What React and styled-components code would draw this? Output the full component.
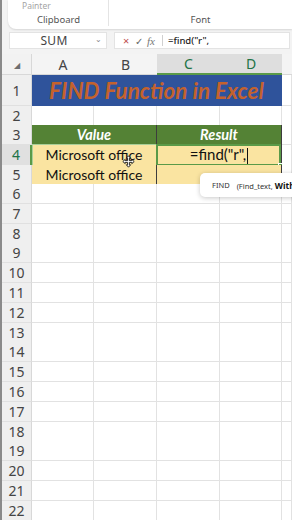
import React from "react";
import styled, { createGlobalStyle } from "styled-components";

const GlobalStyle = createGlobalStyle`
  html, body { margin: 0; padding: 0; }
  body {
    background: #f3f3f3;
    font-family: "Noto Sans", "Open Sans", sans-serif;
    overflow: hidden;
  }
  * { box-sizing: border-box; }
`;

const COLS = "30px 62px 63px 63px 62px 1fr";
const GRID = "#e2e2e2";
const GREEN = "#5a9a48";

const Page = styled.div`
  width: 292px;
  height: 520px;
  display: flex;
  flex-direction: column;
  background: #f3f3f3;
  border-left: 2px solid #8a8a8a;
  position: relative;
  overflow: hidden;
`;

/* ribbon */
const Ribbon = styled.div`
  flex: none;
  height: 29px;
  padding: 0 0 0 6px;
  display: flex;
`;

const RibbonPanel = styled.div`
  flex: 1;
  display: flex;
  background: #fff;
  border-radius: 0 0 0 8px;
  box-shadow: 0 1px 2px rgba(0, 0, 0, 0.12);
`;

const Group = styled.div`
  width: ${(p) => p.$w || "auto"};
  flex: ${(p) => (p.$w ? "none" : 1)};
  display: flex;
  flex-direction: column;
  justify-content: space-between;
  padding: 1px 0 3px;
  position: relative;

  &::after {
    content: "";
    display: ${(p) => (p.$divider ? "block" : "none")};
    position: absolute;
    right: 0;
    top: 0;
    bottom: 3px;
    width: 1px;
    background: #e4e4e4;
  }
`;

const SmallLabel = styled.span`
  font-size: 8.5px;
  color: #a4a4a4;
  padding-left: 14px;
  line-height: 10px;
`;

const GroupLabel = styled.span`
  font-size: 9.5px;
  color: #555;
  text-align: center;
  line-height: 12px;
`;

/* formula bar */
const FormulaBar = styled.div`
  flex: none;
  height: 17px;
  margin-top: 3px;
  display: flex;
  gap: 7px;
  padding: 0 2px 0 7px;
`;

const NameBox = styled.div`
  width: 98px;
  background: #fff;
  border: 1px solid #e3e3e3;
  display: flex;
  align-items: center;
  position: relative;
  font-size: 12px;
  color: #444;
  justify-content: center;
  padding-right: 8px;
  letter-spacing: 0.3px;
`;

const Chevron = styled.span`
  position: absolute;
  right: 4px;
  top: 0;
  font-size: 8px;
  color: #888;
`;

const FormulaBox = styled.div`
  flex: 1;
  background: #fff;
  border: 1px solid #e3e3e3;
  display: flex;
  align-items: center;
  padding-left: 8px;
`;

const BarIcon = styled.span`
  font-size: ${(p) => p.$size || "10px"};
  color: ${(p) => p.$color || "#777"};
  width: ${(p) => p.$w || "12px"};
  font-family: ${(p) => (p.$serif ? '"Liberation Serif", serif' : "inherit")};
  font-style: ${(p) => (p.$serif ? "italic" : "normal")};
`;

const Sep = styled.span`
  width: 1px;
  height: 11px;
  background: #d0d0d0;
  margin: 0 5px 0 2px;
`;

const FormulaText = styled.span`
  font-size: 9.5px;
  color: #222;
  font-weight: 500;
`;

/* sheet */
const Sheet = styled.div`
  margin-top: 5px;
  flex: 1;
  min-height: 0;
  overflow: hidden;
  background: #fff;
`;

const Row = styled.div`
  display: grid;
  grid-template-columns: ${COLS};
  height: ${(p) => p.$h}px;
`;

const Corner = styled.div`
  background: #f2f2f2;
  border-right: 1px solid #d8d8d8;
  border-bottom: 1px solid #d8d8d8;
  display: flex;
  align-items: center;
  justify-content: center;
  color: #6e6e6e;
  font-size: 8px;
`;

const ColHead = styled.div`
  background: ${(p) => (p.$active ? "#dedede" : "#f4f4f4")};
  color: ${(p) => (p.$active ? "#217346" : "#444")};
  border-bottom: ${(p) => (p.$active ? `2px solid ${GREEN}` : "1px solid #d8d8d8")};
  display: flex;
  align-items: center;
  justify-content: center;
  font-size: 14px;
  font-family: "Noto Sans", sans-serif;
`;

const RowHead = styled.div`
  background: ${(p) => (p.$active ? "#e0e0e0" : "#efefef")};
  color: ${(p) => (p.$active ? "#217346" : "#444")};
  border-right: ${(p) => (p.$active ? `2px solid ${GREEN}` : "1px solid #d8d8d8")};
  border-bottom: 1px solid #e0e0e0;
  display: flex;
  align-items: center;
  justify-content: center;
  font-size: 14px;
  font-family: "Noto Sans", sans-serif;
`;

const Cell = styled.div`
  grid-column: span ${(p) => p.$span || 1};
  background: ${(p) => p.$fill || "#fff"};
  border-right: 1px solid ${(p) => p.$line || GRID};
  border-bottom: 1px solid ${(p) => p.$line || GRID};
  display: flex;
  align-items: center;
  justify-content: center;
  font-family: Lato, "Open Sans", sans-serif;
  font-size: ${(p) => p.$fs || "14px"};
  font-weight: ${(p) => (p.$bold ? 700 : 400)};
  font-style: ${(p) => (p.$italic ? "italic" : "normal")};
  color: ${(p) => p.$color || "#111"};
  position: relative;
  white-space: nowrap;
`;

const ActiveFrame = styled.div`
  position: absolute;
  inset: -1px 0 -1px -1px;
  border: 2px solid ${GREEN};
  pointer-events: none;
`;

const RowFrame = styled.div`
  position: absolute;
  inset: -1px 0 -1px 0;
  border: 1px solid #a8cf98;
  border-right: none;
  pointer-events: none;
`;

const FillHandle = styled.span`
  position: absolute;
  right: -4px;
  bottom: -4px;
  width: 5px;
  height: 5px;
  background: ${GREEN};
  border: 1px solid #fff;
`;

const Caret = styled.span`
  display: inline-block;
  width: 1px;
  height: 17px;
  background: #111;
  margin-left: 1px;
  vertical-align: middle;
`;

const Tooltip = styled.div`
  position: absolute;
  left: 198px;
  top: 173px;
  height: 24px;
  width: 110px;
  background: #fff;
  border-radius: 5px;
  box-shadow: 0 1px 5px rgba(0, 0, 0, 0.22);
  display: flex;
  align-items: center;
  gap: 7px;
  padding-left: 12px;
  font-family: "Noto Sans", sans-serif;
  font-size: 7.5px;
  color: #333;
  white-space: nowrap;
`;

const Strong = styled.b`
  font-weight: 700;
  font-size: 8.5px;
  color: #111;
`;

const CursorMark = styled.svg`
  position: absolute;
  left: 120px;
  top: 155px;
  width: 13px;
  height: 13px;
`;

const colHeads = [
  { l: "A" },
  { l: "B" },
  { l: "C", active: true },
  { l: "D", active: true },
  { l: "" },
];

const blankRows = Array.from({ length: 17 }, (_, i) => i + 6);

function BlankCells() {
  return (
    <>
      <Cell />
      <Cell />
      <Cell />
      <Cell />
      <Cell />
    </>
  );
}

export default function App() {
  return (
    <>
      <GlobalStyle />
      <Page>
        <Ribbon>
          <RibbonPanel>
            <Group $w="101px" $divider>
              <SmallLabel>Painter</SmallLabel>
              <GroupLabel>Clipboard</GroupLabel>
            </Group>
            <Group>
              <span />
              <GroupLabel>Font</GroupLabel>
            </Group>
          </RibbonPanel>
        </Ribbon>

        <FormulaBar>
          <NameBox>
            SUM
            <Chevron>&#8964;</Chevron>
          </NameBox>
          <FormulaBox>
            <BarIcon $color="#c0504d" $size="11px">×</BarIcon>
            <BarIcon $color="#666">✓</BarIcon>
            <BarIcon $serif $size="11px" $w="13px">
              fx
            </BarIcon>
            <Sep />
            <FormulaText>=find("r",</FormulaText>
          </FormulaBox>
        </FormulaBar>

        <Sheet>
          <Row $h={21}>
            <Corner>◢</Corner>
            {colHeads.map((c, i) => (
              <ColHead key={i} $active={c.active}>
                {c.l}
              </ColHead>
            ))}
          </Row>

          <Row $h={31}>
            <RowHead>1</RowHead>
            <Cell
              $span={4}
              $fill="#2f539b"
              $line="#2f539b"
              $color="#c4622d"
              $bold
              $italic
              $fs="22.5px"
            >
              FIND Function in Excel
            </Cell>
            <Cell />
          </Row>

          <Row $h={19}>
            <RowHead>2</RowHead>
            <BlankCells />
          </Row>

          <Row $h={20}>
            <RowHead>3</RowHead>
            <Cell $span={2} $fill="#548235" $line="#3d3d3d" $color="#fff" $bold $italic $fs="14.5px">
              Value
            </Cell>
            <Cell $span={2} $fill="#548235" $line="#3d3d3d" $color="#fff" $bold $italic $fs="14.5px">
              Result
            </Cell>
            <Cell />
          </Row>

          <Row $h={20}>
            <RowHead $active>4</RowHead>
            <Cell $span={2} $fill="#fae4a1" $line="#3d3d3d">
              Microsoft office
              <RowFrame />
            </Cell>
            <Cell $span={2} $fill="#fae4a1" $line="#3d3d3d" $fs="15px">
              <span>
                =find("r",
                <Caret />
              </span>
              <ActiveFrame>
                <FillHandle />
              </ActiveFrame>
            </Cell>
            <Cell />
          </Row>

          <Row $h={19}>
            <RowHead>5</RowHead>
            <Cell $span={2} $fill="#fae4a1" $line="#3d3d3d">
              Microsoft office
            </Cell>
            <Cell $span={2} $fill="#fae4a1" $line="#3d3d3d" />
            <Cell />
          </Row>

          {blankRows.map((n) => (
            <Row key={n} $h={19.8}>
              <RowHead>{n}</RowHead>
              <BlankCells />
            </Row>
          ))}
        </Sheet>

        <CursorMark viewBox="0 0 13 13">
          <path
            d="M6.5 0.8 L8.6 3.2 H7.4 V5.6 H9.8 V4.4 L12.2 6.5 L9.8 8.6 V7.4 H7.4 V9.8 H8.6 L6.5 12.2 L4.4 9.8 H5.6 V7.4 H3.2 V8.6 L0.8 6.5 L3.2 4.4 V5.6 H5.6 V3.2 H4.4 Z"
            fill="#fff"
            stroke="#111"
            strokeWidth="0.9"
            strokeLinejoin="round"
          />
        </CursorMark>

        <Tooltip>
          <span>FIND</span>
          <span>
            (Find_text, <Strong>Within_text</Strong>
          </span>
        </Tooltip>
      </Page>
    </>
  );
}
